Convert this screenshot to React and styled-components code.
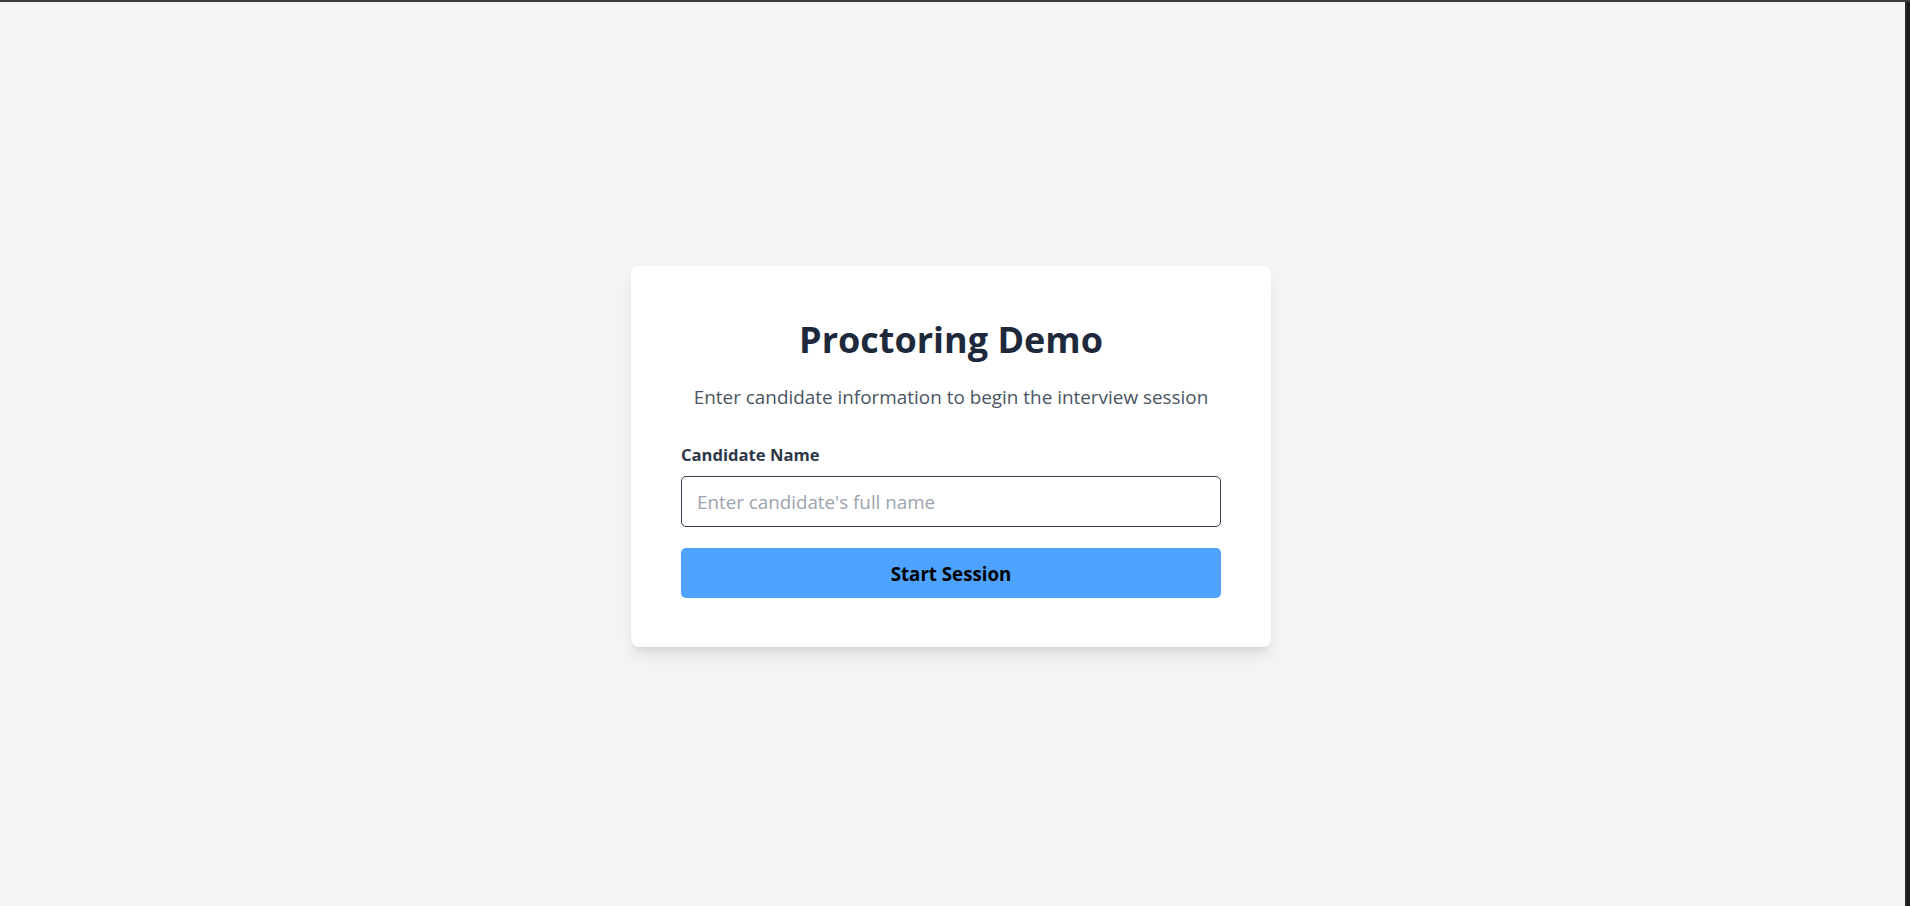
import React, { useState } from 'react';
import styled, { createGlobalStyle } from 'styled-components';

const GlobalStyle = createGlobalStyle`
	html, body {
		margin: 0;
		padding: 0;
		height: 100%;
		background: #1c1c1c;
	}

	#root {
		height: 100%;
	}

	* {
		box-sizing: border-box;
	}
`;

const Frame = styled.div`
	display: flex;
	height: 100%;
	border-top: 2px solid #3a3a3a;
	padding-right: 3px;
`;

const Page = styled.main`
	display: flex;
	flex: 1;
	justify-content: center;
	align-items: center;
	background-color: #f3f4f6;
	border-right: 2px solid #2b2b2b;
	font-family: 'Open Sans', 'Noto Sans', sans-serif;
	padding: 5px 3px 0 0;
`;

const Card = styled.section`
	width: 640px;
	background: #ffffff;
	border-radius: 8px;
	padding: 52px 50px 49px;
	box-shadow: 0 10px 15px -3px rgba(0, 0, 0, 0.1), 0 4px 6px -4px rgba(0, 0, 0, 0.1);
`;

const Title = styled.h1`
	margin: 0;
	text-align: center;
	font-size: 36px;
	line-height: 44px;
	font-weight: 700;
	color: #1e293b;
`;

const Subtitle = styled.p`
	margin: 21px 0 0;
	text-align: center;
	font-size: 18.9px;
	line-height: 28px;
	color: #4b5563;
`;

const Form = styled.form`
	display: flex;
	flex-direction: column;
	margin-top: 33px;
`;

const Label = styled.label`
	font-size: 16.6px;
	line-height: 22px;
	font-weight: 700;
	color: #2d3748;
	margin-bottom: 10px;
`;

const Input = styled.input`
	height: 51px;
	width: 100%;
	padding: 0 15px;
	border: 1px solid #374151;
	border-radius: 5px;
	font-family: inherit;
	font-size: 18.8px;
	color: #1f2937;
	outline: none;

	&::placeholder {
		color: #9ca3af;
	}
`;

const Button = styled.button`
	margin-top: 21px;
	height: 50px;
	width: 100%;
	border: none;
	border-radius: 5px;
	background-color: #4da3ff;
	color: #000000;
	font-family: inherit;
	font-size: 18.7px;
	font-weight: 700;
	cursor: pointer;
`;

const App = () => {
	const [name, setName] = useState('');

	return (
		<>
			<GlobalStyle />
			<Frame>
				<Page>
					<Card>
						<Title>Proctoring Demo</Title>
						<Subtitle>Enter candidate information to begin the interview session</Subtitle>
						<Form onSubmit={e => e.preventDefault()}>
							<Label htmlFor='candidate'>Candidate Name</Label>
							<Input
								id='candidate'
								placeholder="Enter candidate's full name"
								value={name}
								onChange={e => setName(e.target.value)}
							/>
							<Button type='submit'>Start Session</Button>
						</Form>
					</Card>
				</Page>
			</Frame>
		</>
	);
};

export default App;
